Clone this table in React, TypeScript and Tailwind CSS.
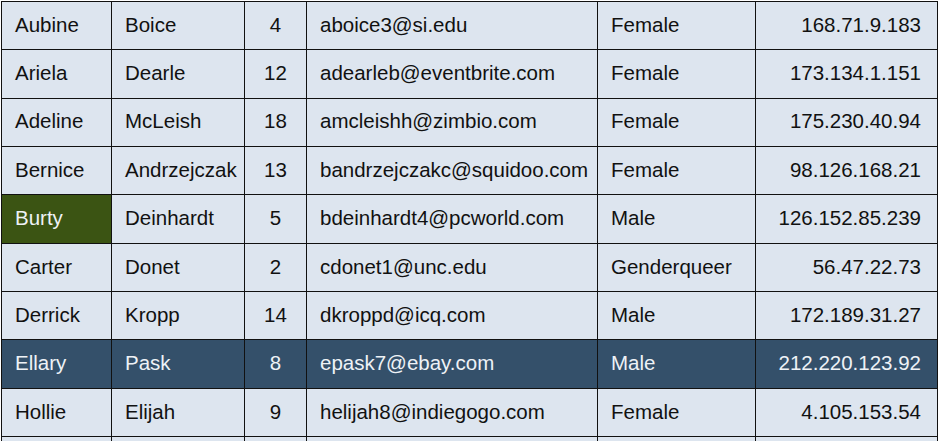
import React from "react";

const rows = [
  ["Aubine", "Boice", "4", "aboice3@si.edu", "Female", "168.71.9.183"],
  ["Ariela", "Dearle", "12", "adearleb@eventbrite.com", "Female", "173.134.1.151"],
  ["Adeline", "McLeish", "18", "amcleishh@zimbio.com", "Female", "175.230.40.94"],
  ["Bernice", "Andrzejczak", "13", "bandrzejczakc@squidoo.com", "Female", "98.126.168.21"],
  ["Burty", "Deinhardt", "5", "bdeinhardt4@pcworld.com", "Male", "126.152.85.239"],
  ["Carter", "Donet", "2", "cdonet1@unc.edu", "Genderqueer", "56.47.22.73"],
  ["Derrick", "Kropp", "14", "dkroppd@icq.com", "Male", "172.189.31.27"],
  ["Ellary", "Pask", "8", "epask7@ebay.com", "Male", "212.220.123.92"],
  ["Hollie", "Elijah", "9", "helijah8@indiegogo.com", "Female", "4.105.153.54"],
];

const widths = ["w-[110px]", "w-[133px]", "w-[62px]", "w-[291px]", "w-[158px]", "w-[182px]"];

export default function App() {
  return (
    <div className="w-[940px] h-[441px] overflow-hidden bg-white" style={{ fontFamily: '"Liberation Sans", Arial, sans-serif' }}>
      <div className="pt-px pl-px">
        <table className="border-collapse table-fixed w-[937px] text-[20.5px] text-[#111]">
          <tbody>
            {rows.map((r, i) => {
              const sel = i === 7;
              return (
                <tr key={i} className={sel ? "bg-[#34506a] text-[#eef2f6]" : "bg-[#dde5ef]"}>
                  {r.map((c, j) => {
                    const burty = i === 4 && j === 0;
                    const align = j === 2 ? "text-center" : j === 5 ? "text-right pr-[16px]" : "text-left pl-[13px]";
                    return (
                      <td
                        key={j}
                        className={`${widths[j]} h-[48.35px] p-0 pb-px border-[1.5px] border-[#111] whitespace-nowrap overflow-hidden ${align} ${burty ? "bg-[#3b5413] text-[#eef2f6]" : ""}`}
                      >
                        {c}
                      </td>
                    );
                  })}
                </tr>
              );
            })}
            <tr className="bg-[#dde5ef]">
              {widths.map((w, j) => (
                <td key={j} className={`${w} h-[48.35px] p-0 border-[1.5px] border-[#111]`}></td>
              ))}
            </tr>
          </tbody>
        </table>
      </div>
    </div>
  );
}
